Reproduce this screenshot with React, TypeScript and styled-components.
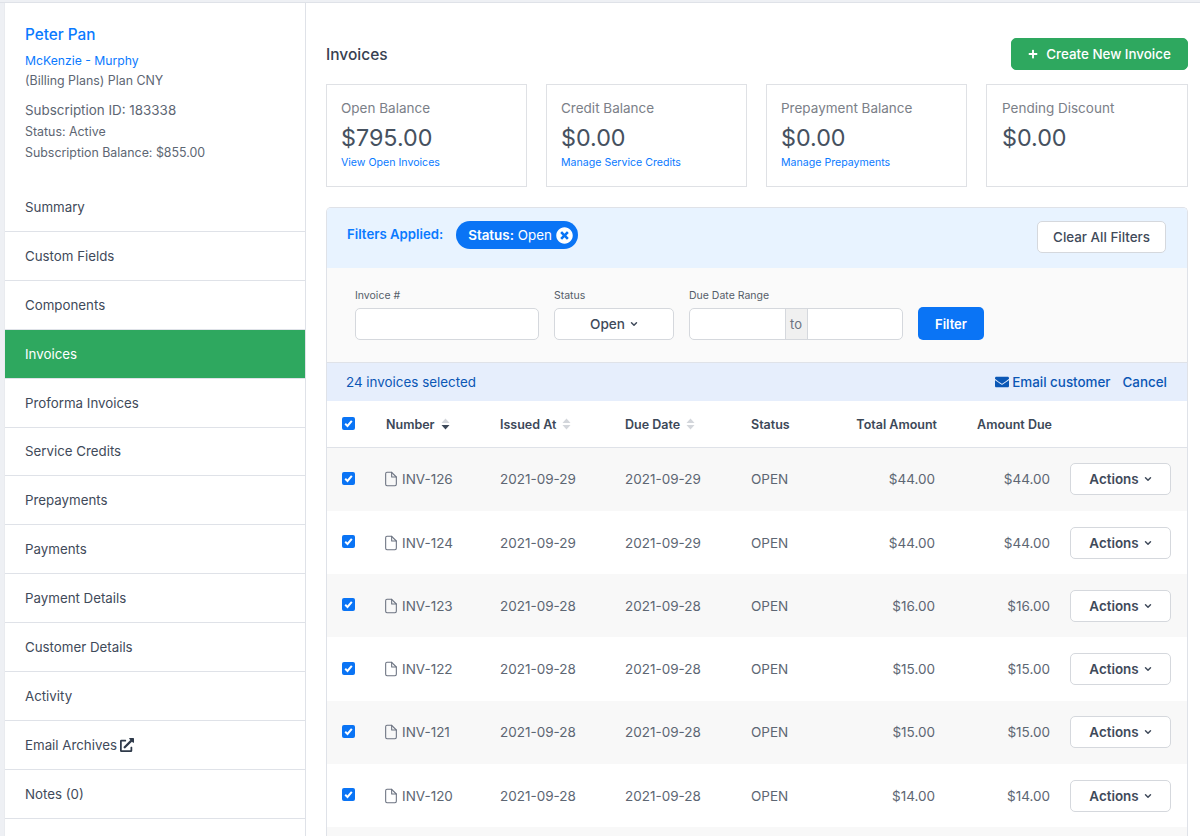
import React from 'react';
import styled, { createGlobalStyle } from 'styled-components';
import { FaEnvelope, FaExternalLinkAlt, FaPlus, FaTimesCircle } from 'react-icons/fa';
import { FiChevronDown, FiFile } from 'react-icons/fi';

const GlobalStyle = createGlobalStyle`
  * { box-sizing: border-box; }
  html, body { margin: 0; height: 100%; overflow: hidden; background: #fff; }
  body { font-family: Inter, "Liberation Sans", sans-serif; color: #4f5b6b; font-size: 14px; }
`;

const Page = styled.div`
  display: flex;
  height: 836px;
  padding-top: 2px;
  background: #eef0f4;
  overflow: hidden;
`;

const Layout = styled.div`
  display: flex;
  flex: 1;
  border-top: 1px solid #dfe2e8;
  padding-left: 4px;
  background: linear-gradient(to right, #eef0f4 4px, #fff 4px);
`;

const Sidebar = styled.aside`
  flex: 0 0 302px;
  border-left: 1px solid #e9ebef;
  border-right: 1px solid #dfe2e8;
  background: #fff;
`;

const Profile = styled.div`
  padding: 21px 20px 0;
  height: 180px;
`;

const Name = styled.a`
  display: block;
  color: #0a7aff;
  font-size: 15.3px;
  font-weight: 500;
  line-height: 22px;
`;

const CompanyLink = styled.a`
  display: block;
  margin-top: 5px;
  color: #0a7aff;
  font-size: 12.2px;
  line-height: 20px;
`;

const Muted = styled.div<{ $top?: number; $size?: number }>`
  margin-top: ${(p) => p.$top ?? 0}px;
  font-size: ${(p) => p.$size ?? 12.4}px;
  line-height: 21px;
  color: #5d6673;
`;

const PlanLine = styled(Muted)`
  line-height: 20px;
`;

const NavItem = styled.div<{ $active?: boolean }>`
  display: flex;
  align-items: center;
  gap: 3px;
  height: 48.92px;
  padding-left: 20px;
  font-size: 13.3px;
  color: ${(p) => (p.$active ? '#fff' : '#3f4a5a')};
  background: ${(p) => (p.$active ? '#2ea85f' : 'transparent')};
  border-bottom: 1px solid #dfe2e8;
`;

const Main = styled.main`
  flex: 1;
  padding: 35px 12px 0 20px;
  min-width: 0;
`;

const TitleRow = styled.div`
  display: flex;
  align-items: center;
  justify-content: space-between;
  height: 32px;
`;

const Title = styled.h1`
  margin: 0;
  font-size: 15.5px;
  font-weight: 500;
  color: #374151;
`;

const CreateButton = styled.button`
  display: flex;
  align-items: center;
  justify-content: center;
  gap: 8px;
  width: 177px;
  height: 32px;
  border: 1px solid #2ea85f;
  border-radius: 5px;
  background: #2ea85f;
  color: #fff;
  font: 500 13.4px Inter, sans-serif;
`;

const Cards = styled.div`
  display: grid;
  grid-template-columns: 201px 201px 201px 202px;
  justify-content: space-between;
  margin-top: 14px;
`;

const Card = styled.div`
  height: 103px;
  padding: 14px 14px 0;
  border: 1px solid #dfe1e5;

  &:last-child {
    padding-left: 15px;
  }
`;

const CardLabel = styled.div`
  font-size: 13.5px;
  line-height: 18px;
  color: #7b8088;
`;

const CardValue = styled.div`
  margin-top: 5px;
  font-size: 23.3px;
  line-height: 32px;
  color: #46515f;
`;

const CardLink = styled.a`
  display: block;
  margin-top: 2px;
  font-size: 10.6px;
  line-height: 14px;
  color: #0a7aff;
`;

const Panel = styled.section`
  margin-top: 20px;
  border: 1px solid #dfe2e8;
  border-bottom: 0;
  border-radius: 5px 5px 0 0;
  overflow: hidden;
`;

const AppliedBar = styled.div`
  display: flex;
  align-items: flex-start;
  height: 60px;
  padding: 13px 21px 0 20px;
  background: #e8f3ff;
`;

const AppliedLabel = styled.span`
  margin-top: 5px;
  font-size: 13.2px;
  font-weight: 600;
  color: #0a7aff;
`;

const Chip = styled.span`
  display: flex;
  align-items: center;
  gap: 4px;
  height: 28px;
  margin-left: 13px;
  padding: 0 5px 0 12px;
  border-radius: 14px;
  background: #0a74f5;
  color: #fff;
  font-size: 13.4px;
  b { font-weight: 600; }
`;

const WhiteButton = styled.button<{ $width: number; $height: number }>`
  display: flex;
  align-items: center;
  justify-content: center;
  gap: 4px;
  width: ${(p) => p.$width}px;
  height: ${(p) => p.$height}px;
  border: 1px solid #d5d8dd;
  border-radius: 5px;
  background: #fff;
  color: #3f4a5a;
  font: 500 13.4px Inter, sans-serif;
`;

const ClearButton = styled(WhiteButton)`
  margin-left: auto;
`;

const ActionsButton = styled(WhiteButton)`
  font-weight: 600;
  padding-right: 5px;
`;

const StatusButton = styled(WhiteButton)`
  padding-right: 5px;
  font-size: 13.6px;
`;

const FilterBar = styled.div`
  display: flex;
  align-items: flex-end;
  gap: 15px;
  height: 95px;
  padding: 0 0 22px 28px;
  background: #fafafa;
  border-bottom: 1px solid #dfe2e8;
`;

const Field = styled.label<{ $width: number }>`
  display: block;
  width: ${(p) => p.$width}px;
`;

const FieldLabel = styled.div`
  margin-bottom: 5px;
  font-size: 10.5px;
  line-height: 14px;
  color: #555d69;
`;

const Input = styled.div`
  height: 32px;
  border: 1px solid #d5d8dd;
  border-radius: 5px;
  background: #fff;
`;

const RangeInput = styled(Input)`
  display: grid;
  grid-template-columns: 1fr 23px 1fr;
  overflow: hidden;
`;

const RangeTo = styled.span`
  display: flex;
  align-items: center;
  justify-content: center;
  background: #f0f0f0;
  border-left: 1px solid #d5d8dd;
  border-right: 1px solid #d5d8dd;
  font-size: 13px;
  color: #6b7280;
`;

const FilterButton = styled.button`
  width: 66px;
  height: 33px;
  border: 0;
  border-radius: 5px;
  background: #0a74f5;
  color: #fff;
  font: 600 13px Inter, sans-serif;
`;

const SelectedBar = styled.div`
  display: flex;
  align-items: center;
  height: 38px;
  padding: 0 20px 0 19px;
  background: #e6eefc;
  color: #0b57b5;
  font-size: 13.4px;
`;

const SelectedActions = styled.div`
  display: flex;
  align-items: center;
  gap: 12px;
  margin-left: auto;
`;

const EmailLink = styled.span`
  display: flex;
  align-items: center;
  gap: 3px;
  font-weight: 500;
`;

const CancelLink = styled.span`
  font-weight: 500;
`;

const columns = '44px 114px 125px 126px 70px 116px 115px 18px 101px';

const HeadRow = styled.div`
  display: grid;
  grid-template-columns: ${columns};
  align-items: center;
  height: 46.6px;
  padding: 1px 0 0 15px;
  background: #fff;
  border-bottom: 1px solid #dfe2e8;
`;

const HeadCell = styled.div<{ $right?: boolean }>`
  display: flex;
  align-items: center;
  gap: 6px;
  justify-content: ${(p) => (p.$right ? 'flex-end' : 'flex-start')};
  font-size: 12.5px;
  font-weight: 600;
  color: #3c4858;
`;

const Row = styled.div<{ $shaded: boolean }>`
  display: grid;
  grid-template-columns: ${columns};
  align-items: center;
  height: 63.3px;
  padding-left: 15px;
  background: ${(p) => (p.$shaded ? '#f8f8f8' : '#fff')};
  font-size: 13.5px;
  color: #5d6673;
`;

// the next row, which the window cuts off before its text starts
const RowEnd = styled.div`
  height: 10px;
  background: #f8f8f8;
`;

const NumberCell = styled.div`
  display: flex;
  align-items: center;
  gap: 3px;
  margin-left: -3px;
`;

const AmountCell = styled.div`
  padding-right: 2px;
  text-align: right;
`;

const Check = styled.span`
  display: flex;
  align-items: center;
  justify-content: center;
  width: 13px;
  height: 13px;
  margin-top: -2px;
  border-radius: 2px;
  background: #0a74f5;
`;

const SortIcon: React.FC<{ $active?: boolean }> = ({ $active }) => (
  <svg width="9" height="12" viewBox="0 0 9 12">
    <path d="M4.5 0.5 8.5 5H0.5z" fill="#d3d6db" />
    <path d="M4.5 11.5 8.5 7H0.5z" fill={$active ? '#3c4858' : '#d3d6db'} />
  </svg>
);

const CheckBox: React.FC = () => (
  <Check>
    <svg width="11" height="11" viewBox="0 0 11 11">
      <path d="M2.2 5.8 4.5 8 8.8 2.8" fill="none" stroke="#fff" strokeWidth="2" />
    </svg>
  </Check>
);

const navItems = [
  'Summary',
  'Custom Fields',
  'Components',
  'Invoices',
  'Proforma Invoices',
  'Service Credits',
  'Prepayments',
  'Payments',
  'Payment Details',
  'Customer Details',
  'Activity',
  'Email Archives',
  'Notes (0)',
];

const balances = [
  { label: 'Open Balance', value: '$795.00', link: 'View Open Invoices' },
  { label: 'Credit Balance', value: '$0.00', link: 'Manage Service Credits' },
  { label: 'Prepayment Balance', value: '$0.00', link: 'Manage Prepayments' },
  { label: 'Pending Discount', value: '$0.00', link: '' },
];

const invoices = [
  { number: 'INV-126', issued: '2021-09-29', amount: '$44.00' },
  { number: 'INV-124', issued: '2021-09-29', amount: '$44.00' },
  { number: 'INV-123', issued: '2021-09-28', amount: '$16.00' },
  { number: 'INV-122', issued: '2021-09-28', amount: '$15.00' },
  { number: 'INV-121', issued: '2021-09-28', amount: '$15.00' },
  { number: 'INV-120', issued: '2021-09-28', amount: '$14.00' },
];

const App: React.FC = () => {
  return (
    <Page>
      <GlobalStyle />
      <Layout>
        <Sidebar>
          <Profile>
            <Name>Peter Pan</Name>
            <CompanyLink>McKenzie - Murphy</CompanyLink>
            <PlanLine>(Billing Plans) Plan CNY</PlanLine>
            <Muted $top={9} $size={13.4}>Subscription ID: 183338</Muted>
            <Muted>Status: Active</Muted>
            <Muted>Subscription Balance: $855.00</Muted>
          </Profile>
          {navItems.map((item) => (
            <NavItem key={item} $active={item === 'Invoices'}>
              {item}
              {item === 'Email Archives' && <FaExternalLinkAlt size={14} color="#2f3a4a" />}
            </NavItem>
          ))}
        </Sidebar>
        <Main>
          <TitleRow>
            <Title>Invoices</Title>
            <CreateButton>
              <FaPlus size={10} />
              Create New Invoice
            </CreateButton>
          </TitleRow>
          <Cards>
            {balances.map((b) => (
              <Card key={b.label}>
                <CardLabel>{b.label}</CardLabel>
                <CardValue>{b.value}</CardValue>
                {b.link && <CardLink>{b.link}</CardLink>}
              </Card>
            ))}
          </Cards>
          <Panel>
            <AppliedBar>
              <AppliedLabel>Filters Applied:</AppliedLabel>
              <Chip>
                <span><b>Status:</b> Open</span>
                <FaTimesCircle size={17} />
              </Chip>
              <ClearButton $width={129} $height={32}>Clear All Filters</ClearButton>
            </AppliedBar>
            <FilterBar>
              <Field $width={184}>
                <FieldLabel>Invoice #</FieldLabel>
                <Input />
              </Field>
              <Field $width={120}>
                <FieldLabel>Status</FieldLabel>
                <StatusButton $width={120} $height={32}>
                  Open <FiChevronDown size={10} strokeWidth={3.5} />
                </StatusButton>
              </Field>
              <Field $width={214}>
                <FieldLabel>Due Date Range</FieldLabel>
                <RangeInput>
                  <span />
                  <RangeTo>to</RangeTo>
                  <span />
                </RangeInput>
              </Field>
              <FilterButton>Filter</FilterButton>
            </FilterBar>
            <SelectedBar>
              24 invoices selected
              <SelectedActions>
                <EmailLink>
                  <FaEnvelope size={14} />
                  Email customer
                </EmailLink>
                <CancelLink>Cancel</CancelLink>
              </SelectedActions>
            </SelectedBar>
            <HeadRow>
              <CheckBox />
              <HeadCell>Number <SortIcon $active /></HeadCell>
              <HeadCell>Issued At <SortIcon /></HeadCell>
              <HeadCell>Due Date <SortIcon /></HeadCell>
              <HeadCell>Status</HeadCell>
              <HeadCell $right>Total Amount</HeadCell>
              <HeadCell $right>Amount Due</HeadCell>
            </HeadRow>
            {invoices.map((inv, i) => (
              <Row key={inv.number} $shaded={i % 2 === 0}>
                <CheckBox />
                <NumberCell>
                  <FiFile size={16} color="#6b7280" strokeWidth={1.6} />
                  {inv.number}
                </NumberCell>
                <div>{inv.issued}</div>
                <div>{inv.issued}</div>
                <div>OPEN</div>
                <AmountCell>{inv.amount}</AmountCell>
                <AmountCell>{inv.amount}</AmountCell>
                <span />
                <ActionsButton $width={101} $height={32}>
                  Actions <FiChevronDown size={10} strokeWidth={3.5} />
                </ActionsButton>
              </Row>
            ))}
            <RowEnd />
          </Panel>
        </Main>
      </Layout>
    </Page>
  );
};

export default App;
